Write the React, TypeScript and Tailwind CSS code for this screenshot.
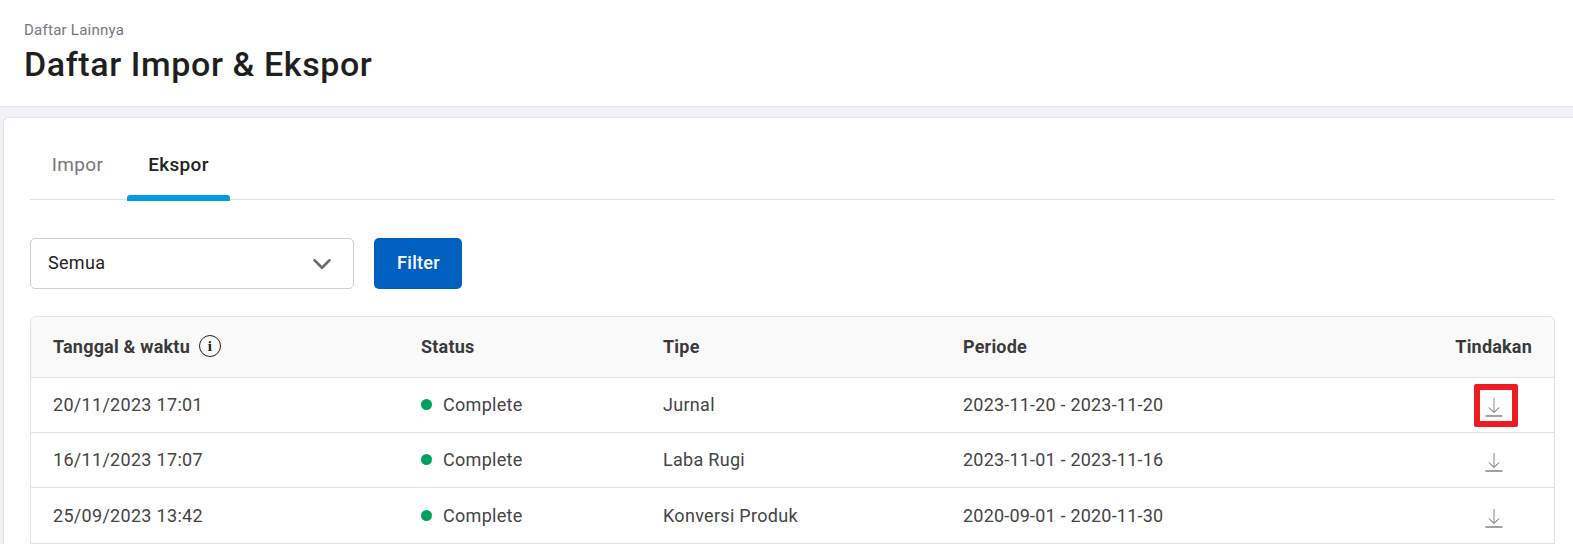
import React from 'react';
import { ChevronDown } from 'lucide-react';

const rows = [
  { date: '20/11/2023 17:01', type: 'Jurnal', period: '2023-11-20 - 2023-11-20', marked: true },
  { date: '16/11/2023 17:07', type: 'Laba Rugi', period: '2023-11-01 - 2023-11-16' },
  { date: '25/09/2023 13:42', type: 'Konversi Produk', period: '2020-09-01 - 2020-11-30' },
];

function DownloadIcon() {
  return (
    <svg width="18" height="20" viewBox="0 0 18 20" fill="none" className="block">
      <path d="M9 1v14" stroke="#7f8c96" strokeWidth="1" />
      <path d="M4 10.5 9 15.5 14 10.5" stroke="#555555" strokeWidth="1" />
      <path d="M0.5 19h17" stroke="#444444" strokeWidth="1" />
    </svg>
  );
}

function InfoIcon() {
  return (
    <span className="flex h-[22px] w-[22px] items-center justify-center rounded-full border-[1.5px] border-[#222222] font-['Liberation_Serif',serif] text-[15px] leading-none text-[#222222]">
      i
    </span>
  );
}

export default function App() {
  return (
    <div className="h-[544px] overflow-hidden bg-[#f1f2f6] font-['Roboto',sans-serif] text-[#333333]">
      <header className="h-[107px] border-b border-[#e6e7eb] bg-white px-6 pt-[21px]">
        <p className="text-[15px] leading-[18px] tracking-[0.25px] text-[#76777b]">Daftar Lainnya</p>
        <h1 className="mt-[5px] text-[34px] leading-[40px] font-medium tracking-[0.6px] text-[#1f1f1f]">
          Daftar Impor &amp; Ekspor
        </h1>
      </header>

      <main className="mt-[10px] ml-[3px] h-[500px] rounded-tl-[6px] border-t border-l border-[#e3e4e8] bg-white pt-[1px] pr-[18px] pl-[26px]">
        <nav className="flex h-[81px] border-b border-[#e0e1e3]">
          <div className="flex w-[97px] justify-center pt-[32px] pr-[2px] text-[19px] leading-[28px] tracking-[0.3px] text-[#76777b]">
            Impor
          </div>
          <div className="relative flex w-[103px] justify-center pt-[32px] text-[19px] leading-[28px] font-medium tracking-[0.3px] text-[#222222]">
            Ekspor
            <span className="absolute right-0 -bottom-[2px] left-0 h-[6px] rounded-t-[3px] bg-[#009be0]" />
          </div>
        </nav>

        <div className="mt-[38px] flex gap-[20px]">
          <div className="flex h-[51px] w-[324px] items-center justify-between rounded-[5px] border border-[#ccd1d6] pr-[16px] pb-[2px] pl-[17px] text-[18px] tracking-[0.3px] text-[#222222]">
            <span>Semua</span>
            <ChevronDown size={30} strokeWidth={2} className="mt-[2px] text-[#6b6b6b]" />
          </div>
          <button className="h-[51px] w-[88px] rounded-[5px] bg-[#0060c0] pb-[2px] pl-[1px] text-[18px] font-medium tracking-[0.3px] text-white">
            Filter
          </button>
        </div>

        <div className="mt-[27px] rounded-t-[6px] border border-[#e3e3e3]">
          <div className="flex h-[61px] items-center rounded-t-[6px] border-b border-[#e3e3e3] bg-[#fafafa] pr-[22px] pb-[2px] pl-[22px] text-[18px] font-bold tracking-[0.2px] text-[#3a3a3a]">
            <div className="flex w-[368px] items-center gap-[9px]">
              Tanggal &amp; waktu
              <InfoIcon />
            </div>
            <div className="w-[242px]">Status</div>
            <div className="w-[300px]">Tipe</div>
            <div className="flex-1">Periode</div>
            <div>Tindakan</div>
          </div>
          {rows.map((row) => (
            <div
              key={row.date}
              className="flex h-[55px] items-center border-b border-[#e3e3e3] pr-[22px] pb-[2px] pl-[22px] text-[18px] tracking-[0.3px] text-[#444444] last:h-[56px] last:pb-0"
            >
              <div className="w-[368px]">{row.date}</div>
              <div className="flex w-[242px] items-center gap-[11px]">
                <span className="h-[11px] w-[11px] rounded-full bg-[#00a060]" />
                Complete
              </div>
              <div className="w-[300px]">{row.type}</div>
              <div className="flex-1 tracking-[0.2px]">{row.period}</div>
              <div className="relative mt-[5px] mr-[29px]">
                <DownloadIcon />
                {row.marked && (
                  <span className="absolute -top-[13px] -left-[11px] h-[43px] w-[44px] rounded-[2px] border-[6px] border-[#ed1c24]" />
                )}
              </div>
            </div>
          ))}
        </div>
      </main>
    </div>
  );
}
